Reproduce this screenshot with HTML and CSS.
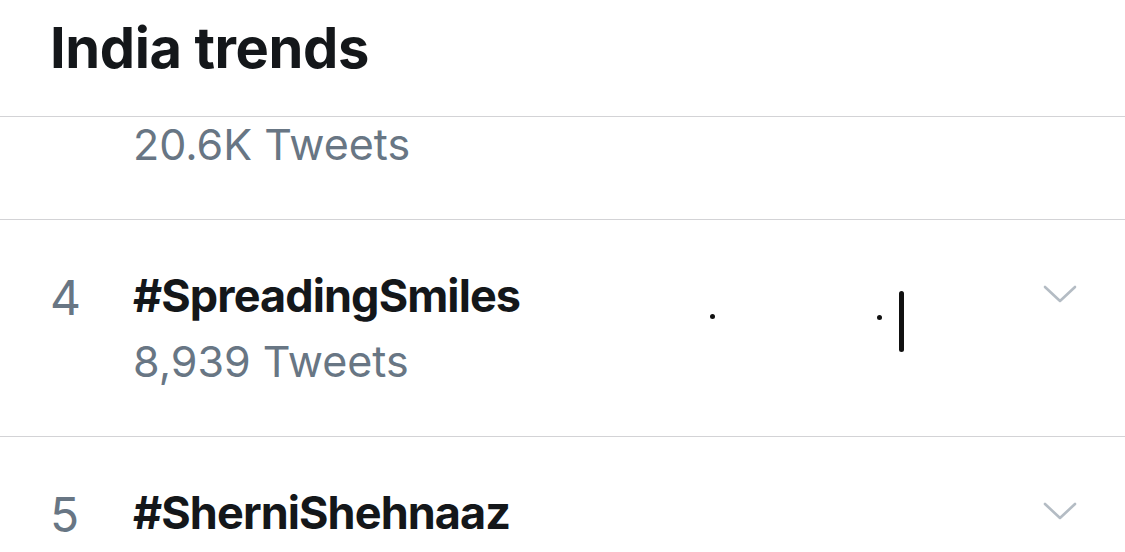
FILE: index.html
```html
<!DOCTYPE html>
<html lang="en">
<head>
<meta charset="utf-8">
<title>India trends</title>
<link rel="stylesheet" href="styles.css">
</head>
<body>
<div class="panel">
  <header class="header">
    <h1 class="title">India trends</h1>
  </header>
  <div class="row row-partial">
    <div class="rank"></div>
    <div class="info">
      <div class="count">20.6K Tweets</div>
    </div>
  </div>
  <div class="row">
    <div class="rank">4</div>
    <div class="info">
      <div class="name">#SpreadingSmiles</div>
      <div class="count">8,939 Tweets</div>
    </div>
    <svg class="chev" viewBox="0 0 34 18" width="34" height="18"><path d="M2 2 L17 16 L32 2" fill="none" stroke="#b4bcc4" stroke-width="2.6" stroke-linecap="round" stroke-linejoin="round"/></svg>
    <span class="dot dot-a"></span>
    <span class="dot dot-b"></span>
    <span class="caret"></span>
  </div>
  <div class="row">
    <div class="rank">5</div>
    <div class="info">
      <div class="name">#SherniShehnaaz</div>
    </div>
    <svg class="chev" viewBox="0 0 34 18" width="34" height="18"><path d="M2 2 L17 16 L32 2" fill="none" stroke="#b4bcc4" stroke-width="2.6" stroke-linecap="round" stroke-linejoin="round"/></svg>
  </div>
</div>
</body>
</html>
```
FILE: styles.css
```css
html, body {
  margin: 0;
  padding: 0;
  background: #ffffff;
}
body {
  font-family: Inter, "Noto Sans", "Liberation Sans", sans-serif;
  color: #14171a;
  width: 1125px;
  height: 552px;
  overflow: hidden;
}
.header {
  height: 117px;
  box-sizing: border-box;
  padding: 18px 0 0 50px;
  border-bottom: 1px solid #d3d3d6;
}
.title {
  margin: 0;
  font-size: 56px;
  line-height: 60px;
  font-weight: 700;
  letter-spacing: -0.4px;
}
.row {
  position: relative;
  display: grid;
  grid-template-columns: 83px 1fr auto;
  align-items: start;
  padding: 49px 48px 50px 50px;
  border-bottom: 1px solid #d3d3d6;
}
.row-partial {
  padding-top: 2px;
  padding-bottom: 50px;
}
.rank {
  font-size: 48px;
  line-height: 54px;
  color: #687684;
  padding-top: 2px;
}
.info {
  display: flex;
  flex-direction: column;
  gap: 13px;
}
.name {
  font-size: 45px;
  line-height: 54px;
  font-weight: 700;
  letter-spacing: -0.9px;
}
.count {
  font-size: 43px;
  line-height: 50px;
  color: #687684;
  letter-spacing: 0;
}
.chev {
  margin-top: 16px;
}
.dot {
  position: absolute;
  width: 5px;
  height: 5px;
  border-radius: 50%;
  background: #111;
}
.dot-a { left: 710px; top: 94px; }
.dot-b { left: 877px; top: 95px; }
.caret {
  position: absolute;
  left: 899px;
  top: 71px;
  width: 5px;
  height: 61px;
  border-radius: 3px;
  background: #111;
}
```
